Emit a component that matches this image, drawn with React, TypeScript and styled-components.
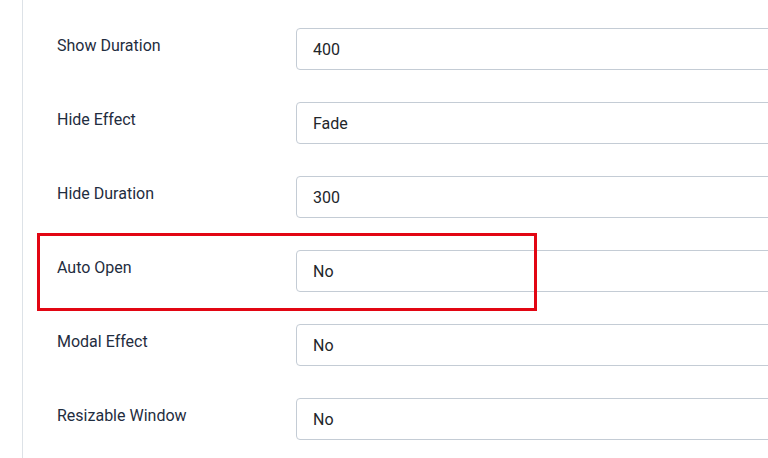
import React from 'react';
import styled, { createGlobalStyle } from 'styled-components';

const GlobalStyle = createGlobalStyle`
    html, body {
        margin: 0;
        padding: 0;
        background: #ffffff;
        overflow: hidden;
    }
    body {
        font-family: Roboto, "Noto Sans", "Liberation Sans", sans-serif;
    }
`;

type Field = {
    label: string;
    value: string;
    highlighted?: boolean;
};

const fields: Field[] = [
    { label: 'Show Duration', value: '400' },
    { label: 'Hide Effect', value: 'Fade' },
    { label: 'Hide Duration', value: '300' },
    { label: 'Auto Open', value: 'No', highlighted: true },
    { label: 'Modal Effect', value: 'No' },
    { label: 'Resizable Window', value: 'No' },
];

export default function App() {
    return (
        <>
            <GlobalStyle />
            <Page>
                <Panel>
                    {fields.map((field) => (
                        <FieldRow key={field.label} $highlighted={field.highlighted}>
                            <FieldLabel>{field.label}</FieldLabel>
                            <FieldInput type="text" defaultValue={field.value} readOnly />
                        </FieldRow>
                    ))}
                </Panel>
            </Page>
        </>
    );
}

const Page = styled.div`
    width: 768px;
    height: 458px;
    overflow: hidden;
    padding-left: 22px;
    box-sizing: border-box;
`;

const Panel = styled.div`
    display: flex;
    flex-direction: column;
    gap: 32px;
    min-height: 100%;
    padding: 28px 0 0 34px;
    border-left: 1px solid #dde2e7;
    box-sizing: border-box;
`;

const FieldRow = styled.div<{ $highlighted?: boolean }>`
    position: relative;
    display: grid;
    grid-template-columns: 239px 520px;
    align-items: start;

    &::after {
        content: '';
        display: ${({ $highlighted }) => ($highlighted ? 'block' : 'none')};
        position: absolute;
        left: -20px;
        top: -17px;
        width: 500px;
        height: 78px;
        border: 3px solid #e20613;
        box-sizing: border-box;
        pointer-events: none;
    }
`;

const FieldLabel = styled.label`
    padding-top: 6px;
    font-size: 16px;
    line-height: 24px;
    color: #1f2d40;
`;

const FieldInput = styled.input`
    height: 42px;
    box-sizing: border-box;
    padding: 0 16px;
    border: 1px solid #c4ccd5;
    border-radius: 4px;
    background: #ffffff;
    font-family: inherit;
    font-size: 16px;
    color: #22262a;
    outline: none;
`;
